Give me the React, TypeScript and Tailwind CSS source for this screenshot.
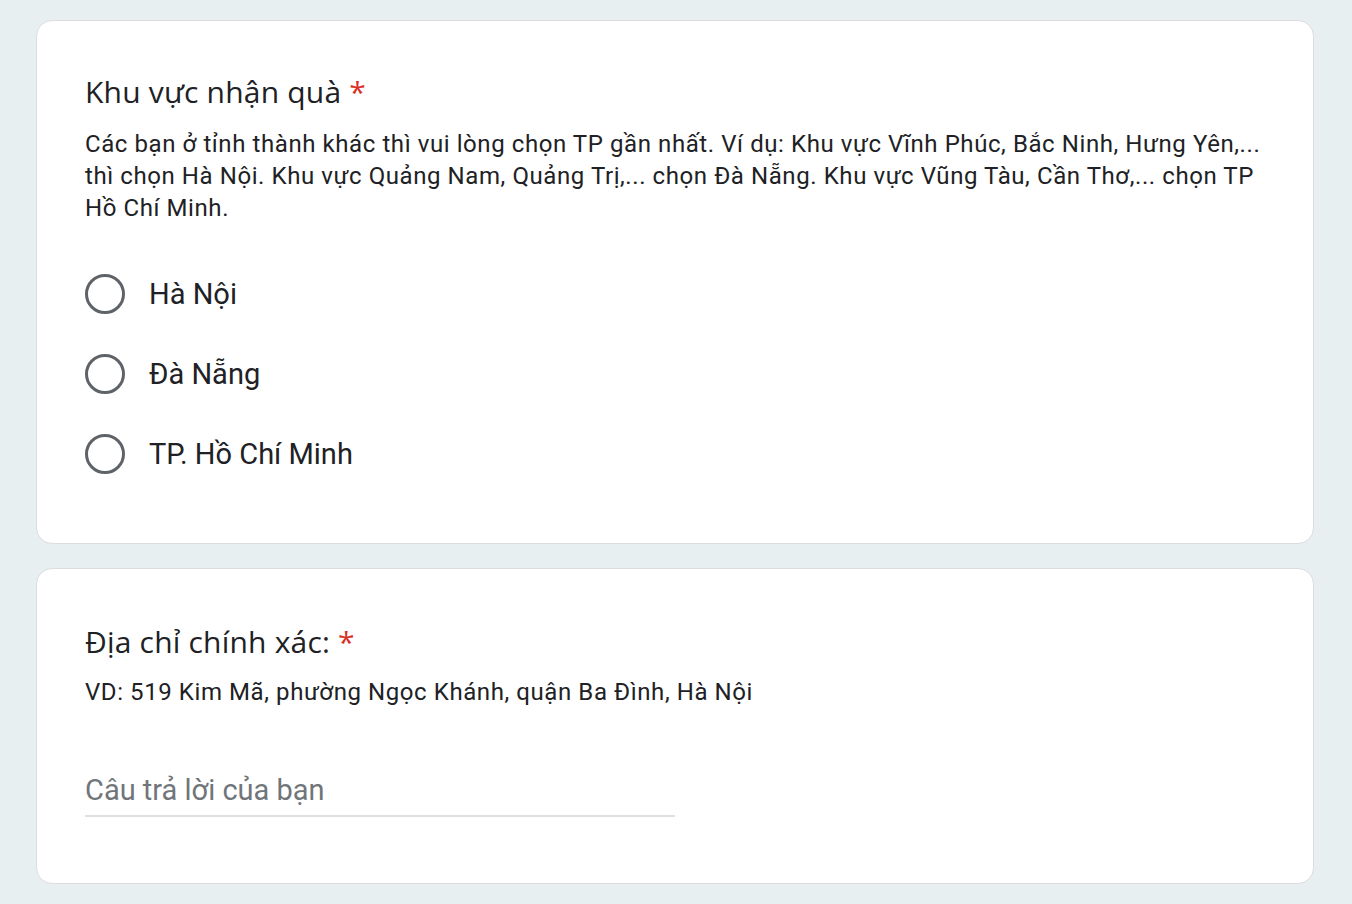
import React from "react";

const options = ["Hà Nội", "Đà Nẵng", "TP. Hồ Chí Minh"];

function Card({ children }: { children: React.ReactNode }) {
  return (
    <div className="ml-[36px] w-[1278px] rounded-[16px] border-[1.5px] border-[#dadce0] bg-white px-[48px]">
      {children}
    </div>
  );
}

function Title({ text }: { text: string }) {
  return (
    <h2
      className="text-[30px] leading-[40px] tracking-[0.2px] text-[#202124]"
      style={{ fontFamily: "'Open Sans', Roboto, sans-serif" }}
    >
      {text}
      <span className="ml-[8px] text-[#d93025]">*</span>
    </h2>
  );
}

export default function App() {
  return (
    <div
      className="min-h-screen bg-[#e8eff1] pt-[20px] pb-[20px]"
      style={{ fontFamily: "Roboto, 'Noto Sans', sans-serif" }}
    >
      <div className="flex flex-col gap-[24px]">
        <Card>
          <div className="pt-[51px] pb-[65px]">
            <Title text="Khu vực nhận quà" />
            <p className="mt-[16px] text-[24px] leading-[32px] tracking-[0.58px] text-[#202124]">
              Các bạn ở tỉnh thành khác thì vui lòng chọn TP gần nhất. Ví dụ: Khu vực Vĩnh Phúc, Bắc Ninh, Hưng Yên,... thì chọn Hà Nội. Khu vực Quảng Nam, Quảng Trị,... chọn Đà Nẵng. Khu vực Vũng Tàu, Cần Thơ,... chọn TP Hồ Chí Minh.
            </p>
            <div className="mt-[46px] flex flex-col gap-[32px]">
              {options.map((o) => (
                <label key={o} className="flex h-[48px] items-center gap-[24px]">
                  <span className="h-[40px] w-[40px] shrink-0 rounded-full border-[3px] border-[#5f6368]" />
                  <span className="text-[29px] leading-[36px] text-[#202124]">
                    {o}
                  </span>
                </label>
              ))}
            </div>
          </div>
        </Card>
        <Card>
          <div className="pt-[53px] pb-[66px]">
            <Title text="Địa chỉ chính xác:" />
            <p className="mt-[14px] text-[24px] leading-[32px] tracking-[0.58px] text-[#202124]">
              VD: 519 Kim Mã, phường Ngọc Khánh, quận Ba Đình, Hà Nội
            </p>
            <div className="mt-[64px] w-[590px] border-b-[2px] border-[#e0e0e0] pb-[7px]">
              <span className="block text-[29px] leading-[36px] text-[#70757a]">
                Câu trả lời của bạn
              </span>
            </div>
          </div>
        </Card>
      </div>
    </div>
  );
}
